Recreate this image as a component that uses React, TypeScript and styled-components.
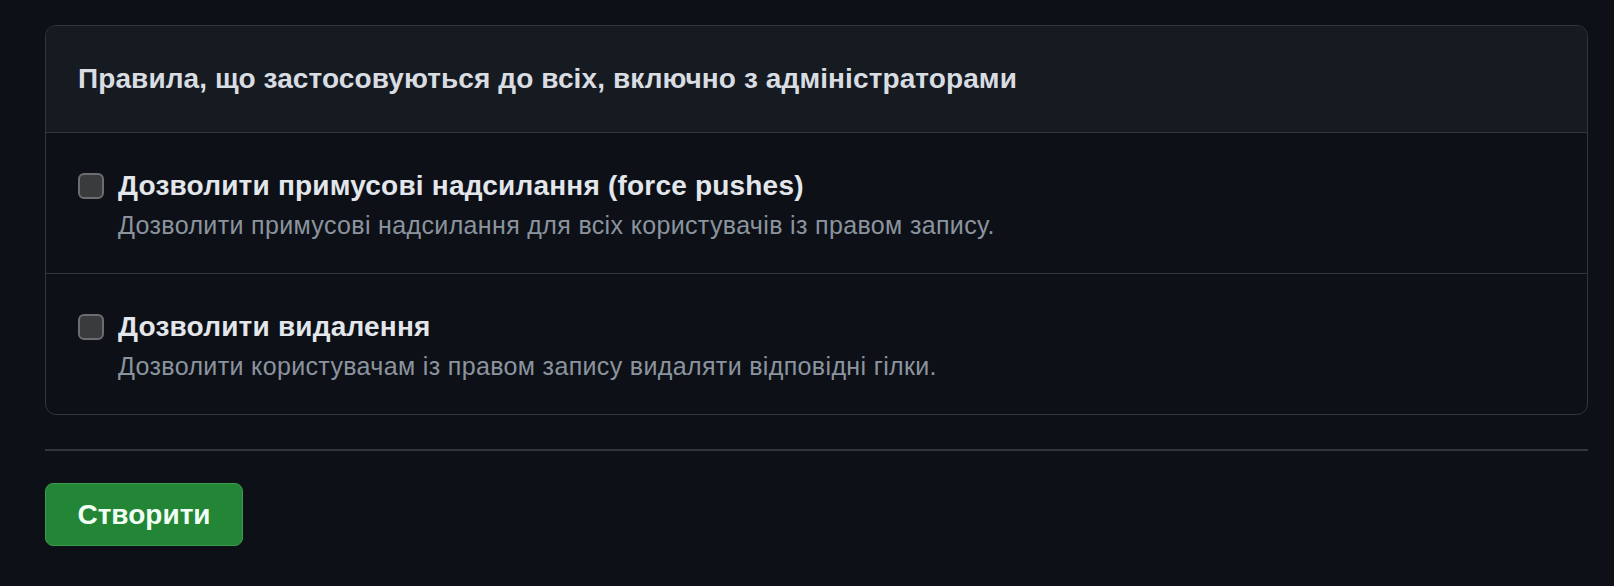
import styled, { createGlobalStyle } from "styled-components";

const GlobalStyle = createGlobalStyle`
  html, body {
    margin: 0;
    padding: 0;
    background: #0d1117;
  }
  body {
    font-family: "Liberation Sans", Arial, sans-serif;
    color: #e6edf3;
  }
`;

interface Rule {
  id: string;
  title: string;
  description: string;
}

const rules: Rule[] = [
  {
    id: "force-push",
    title: "Дозволити примусові надсилання (force pushes)",
    description:
      "Дозволити примусові надсилання для всіх користувачів із правом запису.",
  },
  {
    id: "deletions",
    title: "Дозволити видалення",
    description:
      "Дозволити користувачам із правом запису видаляти відповідні гілки.",
  },
];

const App = () => {
  return (
    <Page>
      <GlobalStyle />
      <Panel>
        <PanelHeader>
          Правила, що застосовуються до всіх, включно з адміністраторами
        </PanelHeader>
        {rules.map((rule) => (
          <RuleRow key={rule.id}>
            <Checkbox type="checkbox" id={rule.id} />
            <RuleText>
              <RuleTitle htmlFor={rule.id}>{rule.title}</RuleTitle>
              <RuleNote>{rule.description}</RuleNote>
            </RuleText>
          </RuleRow>
        ))}
      </Panel>
      <Divider />
      <CreateButton type="button">Створити</CreateButton>
    </Page>
  );
};

export default App;

const Page = styled.div`
  padding: 25px 26px 40px 45px;
  min-height: 586px;
  box-sizing: border-box;
  background: #0d1117;
`;

const Panel = styled.div`
  border: 1px solid #30363d;
  border-radius: 11px;
  overflow: hidden;
`;

const PanelHeader = styled.div`
  background: #161b22;
  padding: 34px 32px;
  font-size: 28px;
  line-height: 38px;
  font-weight: 700;
  letter-spacing: 0.1px;
  color: #d9dde2;
  border-bottom: 1px solid #30363d;
`;

const RuleRow = styled.div`
  display: flex;
  align-items: flex-start;
  gap: 14px;
  padding: 34px 32px 32px;
  & + & {
    border-top: 1px solid #30363d;
  }
`;

const Checkbox = styled.input`
  appearance: none;
  margin: 6px 0 0;
  width: 26px;
  height: 26px;
  flex: none;
  box-sizing: border-box;
  border: 2px solid #6b6d70;
  border-radius: 6px;
  background: #3a3b3d;
  cursor: pointer;
`;

const RuleText = styled.div`
  display: flex;
  flex-direction: column;
  gap: 4px;
`;

const RuleTitle = styled.label`
  font-size: 28px;
  line-height: 38px;
  font-weight: 700;
  letter-spacing: 0.2px;
  color: #e3e6ea;
  cursor: pointer;
`;

const RuleNote = styled.p`
  margin: 0;
  font-size: 25px;
  line-height: 32px;
  letter-spacing: 0.35px;
  color: #8b949e;
`;

const Divider = styled.hr`
  margin: 34px 0 32px;
  border: none;
  border-top: 2px solid #30363d;
`;

const CreateButton = styled.button`
  width: 198px;
  height: 63px;
  border: 1px solid #3a9a4e;
  border-radius: 8px;
  background: #238636;
  color: #f2fff4;
  font-family: "Liberation Sans", Arial, sans-serif;
  font-size: 28px;
  font-weight: 700;
  cursor: pointer;
`;
